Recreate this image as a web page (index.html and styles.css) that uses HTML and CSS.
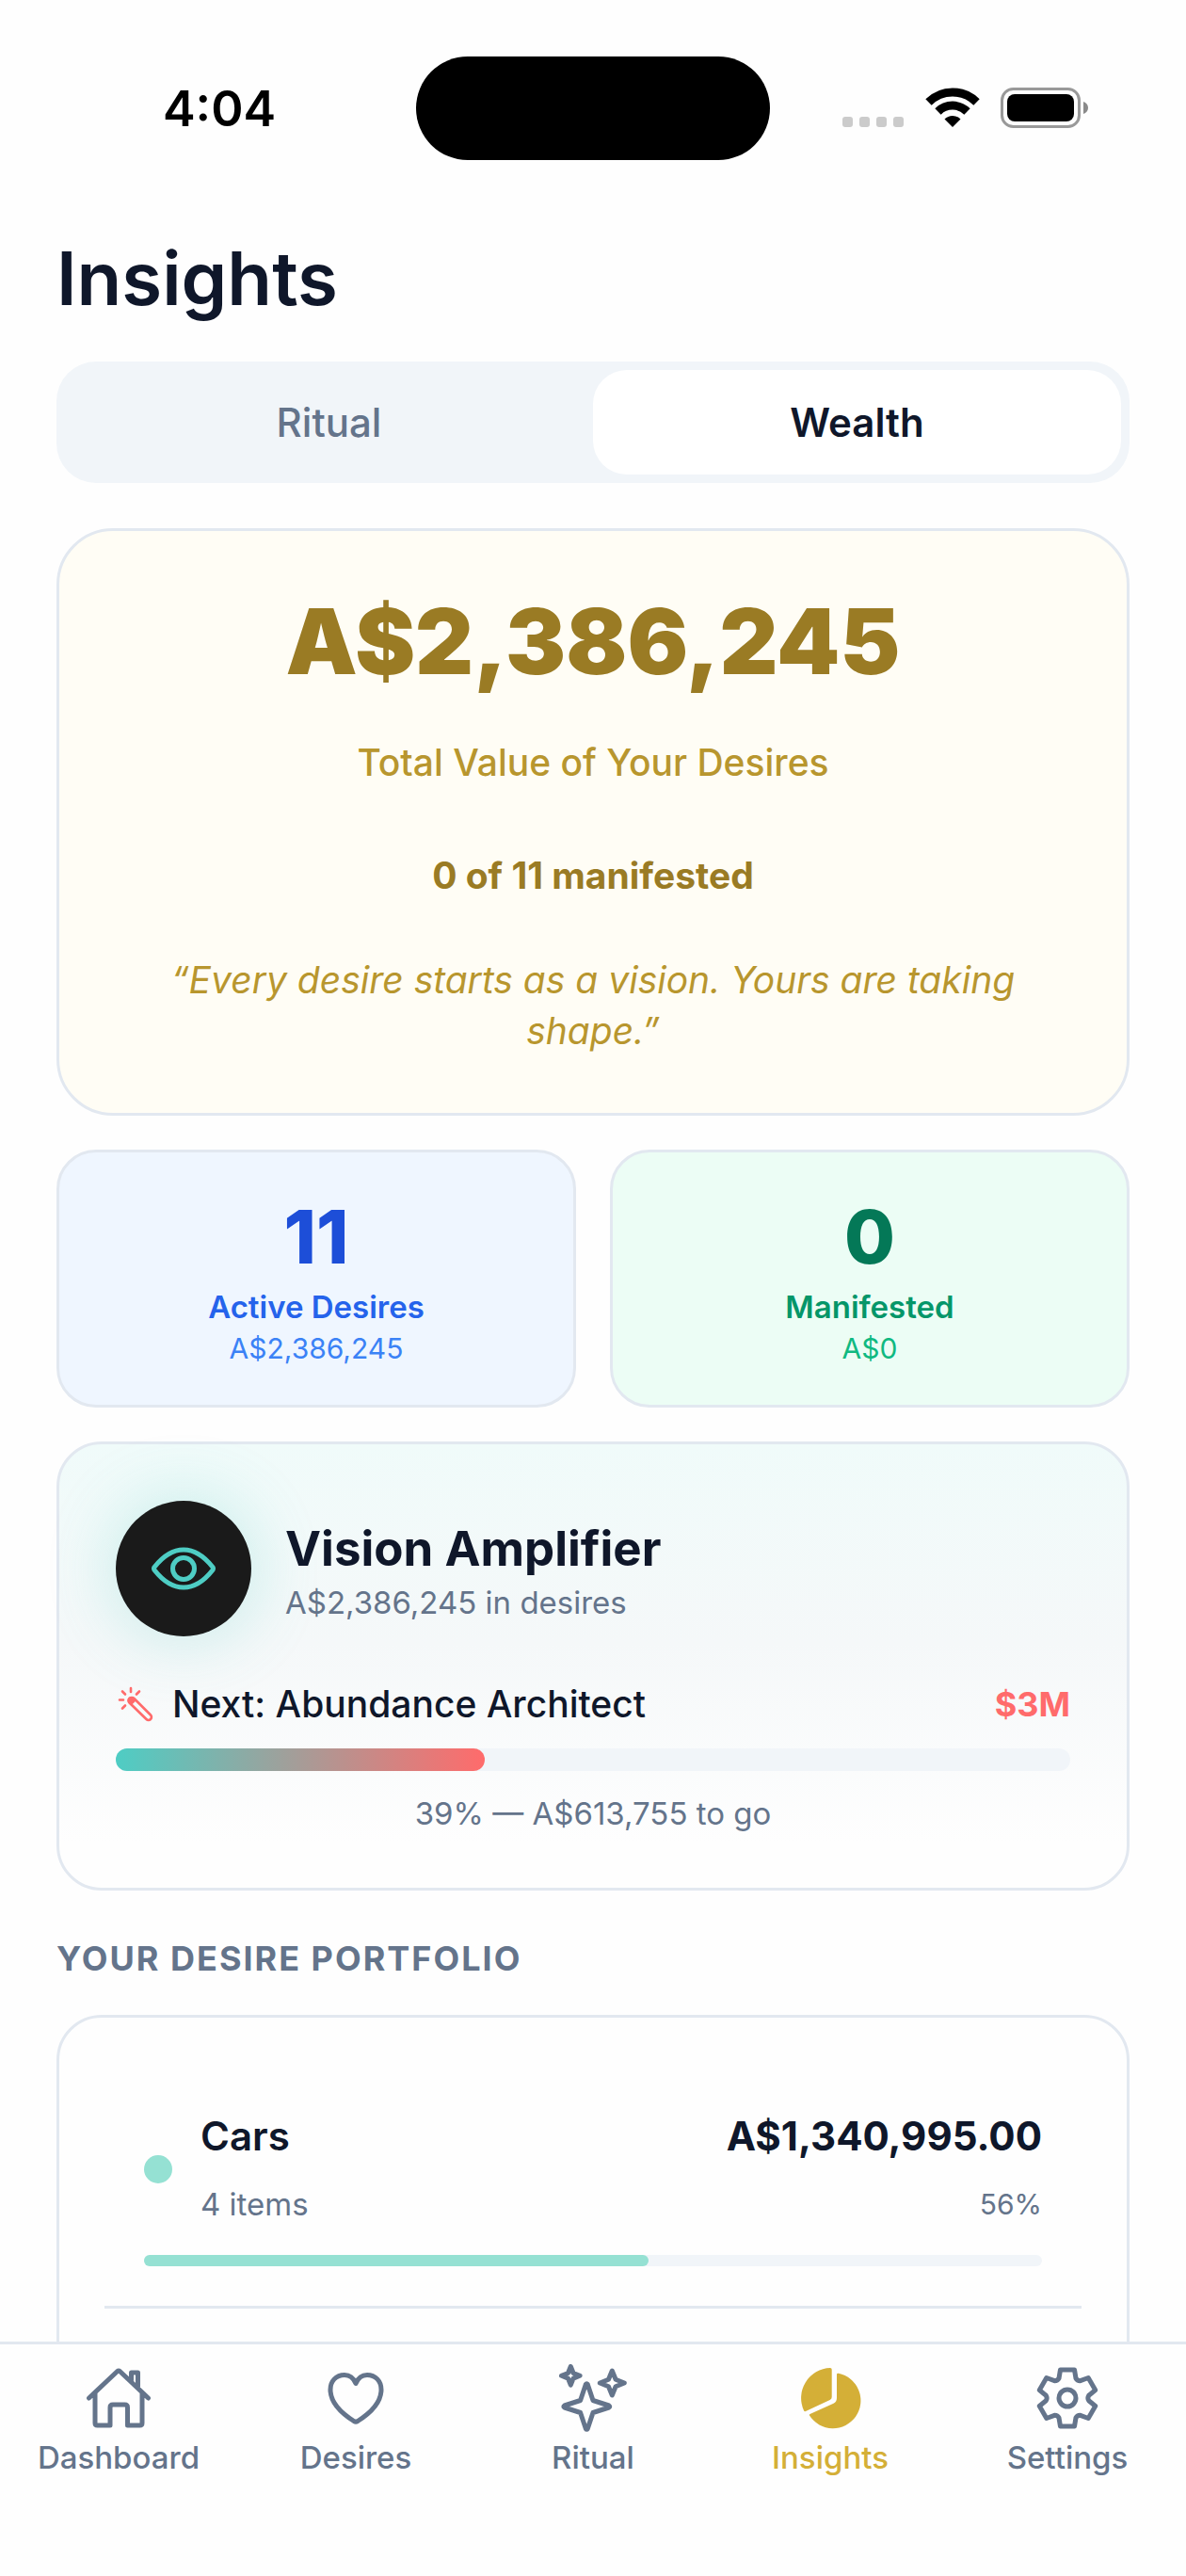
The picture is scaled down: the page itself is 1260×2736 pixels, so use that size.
FILE: index.html
```html
<!DOCTYPE html>
<html lang="en">
<head>
    <meta charset="UTF-8">
    <meta name="viewport" content="width=device-width, initial-scale=1.0">
    <title>Insights</title>
    <link rel="stylesheet" href="styles.css">
</head>
<body>
    <div class="status">
        <div class="time">4:04</div>
        <div class="island"></div>
        <div class="signals">
            <svg width="66" height="66" viewBox="0 0 66 66" fill="#cbcbcb">
                <rect x="0" y="42" width="11" height="11" rx="3"/>
                <rect x="18" y="42" width="11" height="11" rx="3"/>
                <rect x="36" y="42" width="11" height="11" rx="3"/>
                <rect x="54" y="42" width="11" height="11" rx="3"/>
            </svg>
            <svg width="58" height="66" viewBox="0 0 58 66" fill="none" stroke="#000">
                <path d="M3.5 26.5a36 36 0 0 1 51 0" stroke-width="9"/>
                <path d="M13.500 36.500a22 22 0 0 1 31 0" stroke-width="9"/>
                <path d="M29 53l-8.500-8.500a12 12 0 0 1 17 0z" fill="#000" stroke="none"/>
            </svg>
            <svg width="94" height="66" viewBox="0 0 94 66">
                <rect x="1.500" y="12.500" width="82" height="40" rx="12" fill="none" stroke="#999" stroke-width="3"/>
                <rect x="7" y="18" width="71" height="29" rx="8"/>
                <path d="M88 26c3 1 5 3.500 5 6.500s-2 5.500-5 6.500z" fill="#8a8a8a"/>
            </svg>
        </div>
    </div>

    <main class="page">
        <h1>Insights</h1>
        <div class="switch">
            <button type="button">Ritual</button>
            <button type="button" class="on">Wealth</button>
        </div>

        <section class="card total">
            <div class="amount">A$2,386,245</div>
            <div class="label">Total Value of Your Desires</div>
            <div class="count">0 of 11 manifested</div>
            <p class="quote">“Every desire starts as a vision. Yours are taking shape.”</p>
        </section>

        <section class="stats">
            <div class="card stat active">
                <div class="num">11</div>
                <div class="name">Active Desires</div>
                <div class="sum">A$2,386,245</div>
            </div>
            <div class="card stat done">
                <div class="num">0</div>
                <div class="name">Manifested</div>
                <div class="sum">A$0</div>
            </div>
        </section>

        <section class="card level">
            <div class="level-top">
                <div class="badge">
                    <svg width="72" height="72" viewBox="0 0 72 72" fill="none" stroke="#4ecdc4" stroke-width="5" stroke-linejoin="round">
                        <path d="M5 34.500C14 23 24 16 36 16s22 7 31 18.500q1 1.500 0 3C58 49 48 56 36 56S14 49 5 37.500q-1-1.500 0-3z"/>
                        <circle cx="36" cy="36" r="11.500"/>
                    </svg>
                </div>
                <div class="level-name">
                    <h2>Vision Amplifier</h2>
                    <div class="muted">A$2,386,245 in desires</div>
                </div>
            </div>
            <div class="next">
                <svg width="42" height="42" viewBox="0 0 42 42" fill="none" stroke="#ff6b6b" stroke-width="2.600" stroke-linecap="round">
                    <path d="M16 4v4M7 7.500l3 3M25 7.500l-3 3M4 16.500h4M7 25.500l3-3"/>
                    <path d="M14.500 15a3.500 3.500 0 0 1 5 0l17.500 17.500a3 3 0 0 1-4.500 4.500L14.500 19.500a3.300 3.300 0 0 1 0-4.500z"/>
                    <path d="M15 15l4 1 1 1-3.500 3.500-2-2z" fill="#ff6b6b"/>
                </svg>
                <span class="goal">Next: Abundance Architect</span>
                <span class="price">$3M</span>
            </div>
            <div class="bar"><div class="fill" style="width: 38.7%"></div></div>
            <div class="muted togo">39% — A$613,755 to go</div>
        </section>

        <h3>YOUR DESIRE PORTFOLIO</h3>
        <section class="card portfolio">
            <div class="item">
                <div class="row">
                    <span class="dot"></span>
                    <div class="info">
                        <div class="title">Cars</div>
                        <div class="muted">4 items</div>
                    </div>
                    <div class="info right">
                        <div class="value">A$1,340,995.00</div>
                        <div class="percent">56%</div>
                    </div>
                </div>
                <div class="bar thin"><div class="fill" style="width: 56.2%"></div></div>
            </div>
        </section>
    </main>

    <nav class="tabs">
        <a href="#dashboard">
            <svg width="72" height="72" viewBox="0 0 72 72">
                <path d="M4.500 36L34.500 7.800q1.500-1.200 3 0L67.500 36M11 31v31.500q0 2.500 2.500 2.500H27V46q0-3 3-3h12.500q3 0 3 3v19h13q2.500 0 2.500-2.500V31M49.500 17V9h7v15"/>
            </svg>
            Dashboard
        </a>
        <a href="#desires">
            <svg width="72" height="72" viewBox="0 0 72 72">
                <path d="M36 20.500C33.500 14.500 29 11.500 24 11.500 15 11.500 9 18 9 27c0 13 10 24 25 33.500q2 1.200 4 0C53 51 63 40 63 27c0-9-6-15.500-15-15.500-5 0-9.500 3-12 9z"/>
            </svg>
            Desires
        </a>
        <a href="#ritual">
            <svg width="72" height="72" viewBox="0 0 72 72">
                <path d="M28.300 21.500q1-1.500 2 0L36 38.500l17 5.500q1.500 1 0 2L36 51.500l-5.700 17q-1 1.500-2 0L22.600 51.500 5.600 46q-1.500-1 0-2l17-5.500z"/>
                <path d="M12.300 2.500l2.800 7 7 2.800-7 2.800-2.800 7-2.800-7-7-2.800 7-2.800z"/>
                <path d="M56.300 7l3.800 9.200 9.200 3.800-9.200 3.800-3.800 9.200-3.800-9.200-9.200-3.800 9.200-3.800z"/>
            </svg>
            Ritual
        </a>
        <a href="#insights" class="on">
            <svg width="72" height="72" viewBox="0 0 72 72">
                <path d="M36 4q1.700 0 1.700 1.700V35q0 2-2 3L10 50q-1.500.5-2-.7A32 32 0 0 1 36 4z"/>
                <path d="M43 11q0-1.700 1.800-1.200A29.500 29.500 0 1 1 14 54.500q-.5-1 .5-1.600L39.500 41.700Q43 40 43 36z"/>
            </svg>
            Insights
        </a>
        <a href="#settings">
            <svg width="72" height="72" viewBox="0 0 72 72">
                <g transform="translate(36 36)">
                    <path d="M-7.500-30H7.500L9-21Q10.500-18.200 13.700-18.300L22.200-21.500 29.700-8.500 22.700-2.700Q21 0 22.700 2.700L29.700 8.500 22.200 21.500 13.700 18.300Q10.500 18.200 9 21L7.500 30H-7.500L-9 21Q-10.500 18.200-13.700 18.300L-22.200 21.500-29.700 8.500-22.700 2.700Q-21 0-22.700-2.700L-29.700-8.500-22.200-21.500-13.700-18.300Q-10.500-18.200-9-21z"/>
                    <circle r="9"/>
                </g>
            </svg>
            Settings
        </a>
    </nav>
</body>
</html>
```
FILE: styles.css
```css
*{
    box-sizing: border-box;
}
body{
    margin: 0;
    height: 100vh;
    display: flex;
    flex-direction: column;
    overflow: hidden;
    background-color: #fefefe;
    color: #0f172a;
    font-family: Inter, "Liberation Sans", sans-serif;
}
svg{
    display: block;
}
h1,h2,h3,p{
    margin: 0;
}
.status{
    display: grid;
    grid-template-columns: 1fr 376px 1fr;
    align-items: center;
    padding-top: 60px;
}
.time{
    padding-left: 24px;
    text-align: center;
    color: #000;
    font-size: 52px;
    font-weight: 600;
}
.island{
    height: 110px;
    border-radius: 55px;
    background-color: #000;
}
.signals{
    display: flex;
    justify-content: center;
    gap: 22px;
    padding-right: 26px;
}
.page{
    flex: 1;
    min-height: 0;
    padding: 72px 60px 0;
    overflow: hidden;
}
h1{
    font-size: 78px;
    line-height: 108px;
    font-weight: 600;
}
.switch{
    display: flex;
    margin-top: 34px;
    margin-bottom: 48px;
    padding: 9px;
    border-radius: 42px;
    background-color: #f1f5f9;
}
.switch button{
    flex: 1;
    height: 111px;
    border: 0;
    border-radius: 36px;
    background: none;
    color: #64748b;
    font: 500 42px Inter, "Liberation Sans", sans-serif;
}
.switch .on{
    background-color: #fff;
    color: #0f172a;
    font-weight: 600;
}
.card{
    border: 3px solid #e2e8f0;
    border-radius: 48px;
}
.total{
    padding: 60px 105px;
    border-radius: 60px;
    background-color: #fffdf5;
    color: #9a7b24;
    text-align: center;
}
.amount{
    font-size: 96px;
    line-height: 114px;
    font-weight: 900;
}
.label{
    margin-top: 45px;
    color: #b8962e;
    font-size: 39px;
    line-height: 54px;
    font-weight: 500;
}
.count{
    margin: 66px 0 57px;
    font-size: 39px;
    line-height: 54px;
    font-weight: 700;
}
.quote{
    color: #b8962e;
    font-size: 39px;
    line-height: 54px;
    font-style: italic;
}
.stats{
    display: flex;
    gap: 36px;
    margin: 36px 0;
}
.stat{
    flex: 1;
    padding: 45px 45px 40px;
    border-radius: 42px;
    text-align: center;
}
.num{
    margin-bottom: 5px;
    font-size: 78px;
    line-height: 90px;
    font-weight: 800;
}
.name{
    font-size: 33px;
    line-height: 48px;
    font-weight: 600;
}
.sum{
    font-size: 30px;
    line-height: 40px;
}
.active{
    background-color: #eff6ff;
    color: #1d4ed8;
}
.active .name{
    color: #2563eb;
}
.active .sum{
    color: #3b82f6;
}
.done{
    background-color: #ecfdf5;
    color: #047857;
}
.done .name{
    color: #059669;
}
.done .sum{
    color: #10b981;
}
.level{
    padding: 60px 60px 55px;
    background: linear-gradient(#f0fbfa, #f5f8f9 45%, #fefefe 90%);
}
.level-top{
    display: flex;
    align-items: center;
    gap: 36px;
}
.level-name{
    padding-top: 6px;
}
.badge{
    display: flex;
    align-items: center;
    justify-content: center;
    width: 144px;
    height: 144px;
    border-radius: 50%;
    background-color: #1a1a1a;
    box-shadow: 0 0 72px rgba(78, 205, 196, 0.3);
}
h2{
    font-size: 51px;
    line-height: 66px;
    font-weight: 700;
}
.muted{
    color: #64748b;
    font-size: 33px;
    line-height: 48px;
}
.next{
    display: flex;
    align-items: center;
    gap: 18px;
    margin: 45px 0 20px;
    font-size: 39px;
    line-height: 54px;
    font-weight: 500;
}
.price{
    margin-left: auto;
    color: #ff6b6b;
    font-size: 36px;
    font-weight: 700;
}
.bar{
    height: 24px;
    border-radius: 12px;
    background-color: #f1f5f9;
}
.fill{
    height: 100%;
    border-radius: inherit;
    background: linear-gradient(90deg, #4ecdc4, #ff6b6b);
}
.togo{
    margin-top: 21px;
    text-align: center;
}
h3{
    margin: 48px 0 36px;
    color: #64748b;
    font-size: 36px;
    line-height: 48px;
    font-weight: 700;
    letter-spacing: 2px;
}
.portfolio{
    height: 900px;
    padding: 48px;
}
.item{
    padding: 51px 42px 42px;
    border-bottom: 3px solid #e2e8f0;
}
.row{
    display: flex;
    align-items: center;
    gap: 30px;
}
.dot{
    width: 30px;
    height: 30px;
    border-radius: 50%;
    background-color: #95e1d3;
}
.title,.value{
    margin-bottom: 21px;
    font-size: 42px;
    line-height: 54px;
    font-weight: 600;
}
.value{
    font-weight: 700;
}
.right{
    margin-left: auto;
    text-align: right;
}
.percent{
    color: #64748b;
    font-size: 30px;
    line-height: 48px;
}
.thin{
    height: 12px;
    margin-top: 30px;
}
.thin .fill{
    background: #95e1d3;
}
.tabs{
    display: flex;
    height: 249px;
    padding-top: 21px;
    border-top: 3px solid #e2e8f0;
    background-color: #fefefe;
}
.tabs a{
    flex: 1;
    display: flex;
    flex-direction: column;
    align-items: center;
    gap: 6px;
    color: #64748b;
    font-size: 33px;
    line-height: 42px;
    font-weight: 500;
    text-decoration: none;
}
.tabs svg{
    fill: none;
    stroke: currentColor;
    stroke-width: 5;
    stroke-linecap: round;
    stroke-linejoin: round;
}
.tabs .on{
    color: #d4af37;
}
.tabs .on svg{
    fill: currentColor;
    stroke: none;
}
```
